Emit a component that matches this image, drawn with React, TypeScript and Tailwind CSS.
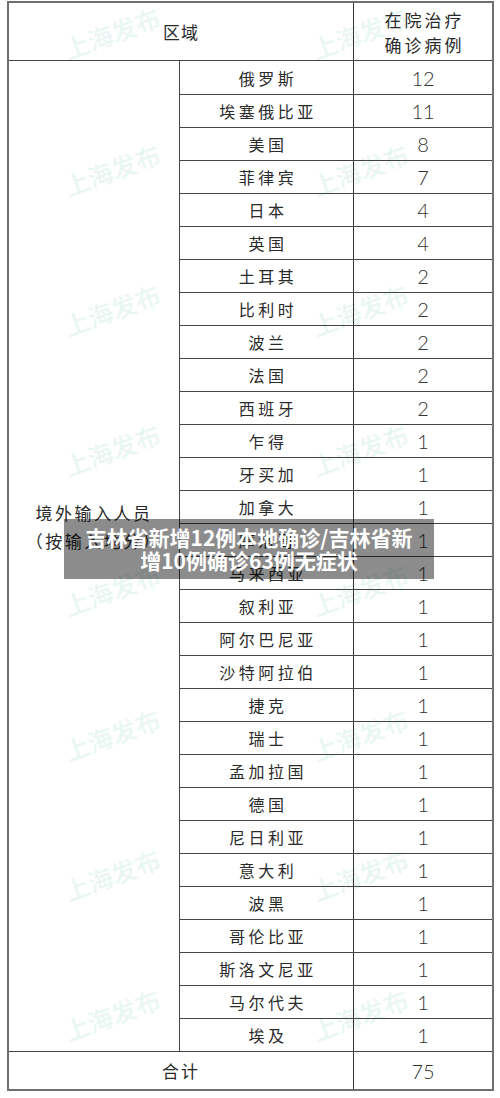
const ROWS: [string, number][] = [
  ['俄罗斯', 12],
  ['埃塞俄比亚', 11],
  ['美国', 8],
  ['菲律宾', 7],
  ['日本', 4],
  ['英国', 4],
  ['土耳其', 2],
  ['比利时', 2],
  ['波兰', 2],
  ['法国', 2],
  ['西班牙', 2],
  ['乍得', 1],
  ['牙买加', 1],
  ['加拿大', 1],
  ['摩洛哥', 1],
  ['马来西亚', 1],
  ['叙利亚', 1],
  ['阿尔巴尼亚', 1],
  ['沙特阿拉伯', 1],
  ['捷克', 1],
  ['瑞士', 1],
  ['孟加拉国', 1],
  ['德国', 1],
  ['尼日利亚', 1],
  ['意大利', 1],
  ['波黑', 1],
  ['哥伦比亚', 1],
  ['斯洛文尼亚', 1],
  ['马尔代夫', 1],
  ['埃及', 1],
]

const WM_Y = [33, 170, 310, 450, 590, 735, 875, 1015]
const WM_X = [112, 360]

const cjk = "font-['Noto_Sans_CJK_SC',sans-serif]"
const num = "font-['Lato','Liberation_Sans',sans-serif] font-light"

export default function App() {
  return (
    <div className="relative w-[500px] h-[1098px] bg-white overflow-hidden">
      {/* watermark layer */}
      <div className="absolute inset-0 pointer-events-none">
        {WM_Y.flatMap((y) =>
          WM_X.map((x) => (
            <span
              key={`${x}-${y}`}
              className={`absolute -translate-x-1/2 -translate-y-1/2 -rotate-[20deg] whitespace-nowrap text-[25px] font-medium text-[#eaf6f3] ${cjk}`}
              style={{ left: x, top: y }}
            >
              上海发布
            </span>
          ))
        )}
      </div>

      {/* table */}
      <div className={`relative ml-[7px] mt-[1px] w-[487px] border-2 border-[#707070] text-[#2a2a2a] ${cjk}`}>
        <div className="flex h-[58px] border-b border-[#444]">
          <div className="w-[345px] flex items-center justify-center border-r border-[#333] text-[17px] tracking-[1px]">
            区域
          </div>
          <div className="flex-1 flex flex-col items-center justify-center text-[17px] leading-[25px] tracking-[3px] pl-[3px]">
            <span>在院治疗</span>
            <span>确诊病例</span>
          </div>
        </div>

        <div className="flex">
          <div className="w-[171px] flex flex-col items-center justify-center pb-[58px] border-r border-[#444] text-[17px] leading-[28px] tracking-[2.5px]">
            <span>境外输入人员</span>
            <span>（按输入地分）</span>
          </div>
          <div className="flex-1 flex flex-col">
            {ROWS.map(([name, n], i) => (
              <div key={name} className={`flex h-[33px] ${i > 0 ? 'border-t border-[#444]' : ''}`}>
                <div className="w-[174px] flex items-center justify-center border-r border-[#333] text-[16px] tracking-[3.5px] pl-[3px]">
                  {name}
                </div>
                <div className={`flex-1 flex items-center justify-center text-[20px] text-[#333] ${num}`}>
                  {n}
                </div>
              </div>
            ))}
          </div>
        </div>

        <div className="flex h-[38px] border-t border-[#444]">
          <div className="w-[345px] flex items-center justify-center border-r border-[#333] text-[17px] tracking-[2px]">
            合计
          </div>
          <div className={`flex-1 flex items-center justify-center text-[20px] text-[#333] ${num}`}>75</div>
        </div>
      </div>

      {/* caption overlay */}
      <div
        className={`absolute left-[64px] top-[519px] w-[370px] h-[60px] bg-black/45 flex flex-col items-center justify-center text-center text-white font-bold text-[21px] leading-[23px] whitespace-nowrap ${cjk}`}
      >
        <span>吉林省新增12例本地确诊/吉林省新</span>
        <span>增10例确诊63例无症状</span>
      </div>
    </div>
  )
}
